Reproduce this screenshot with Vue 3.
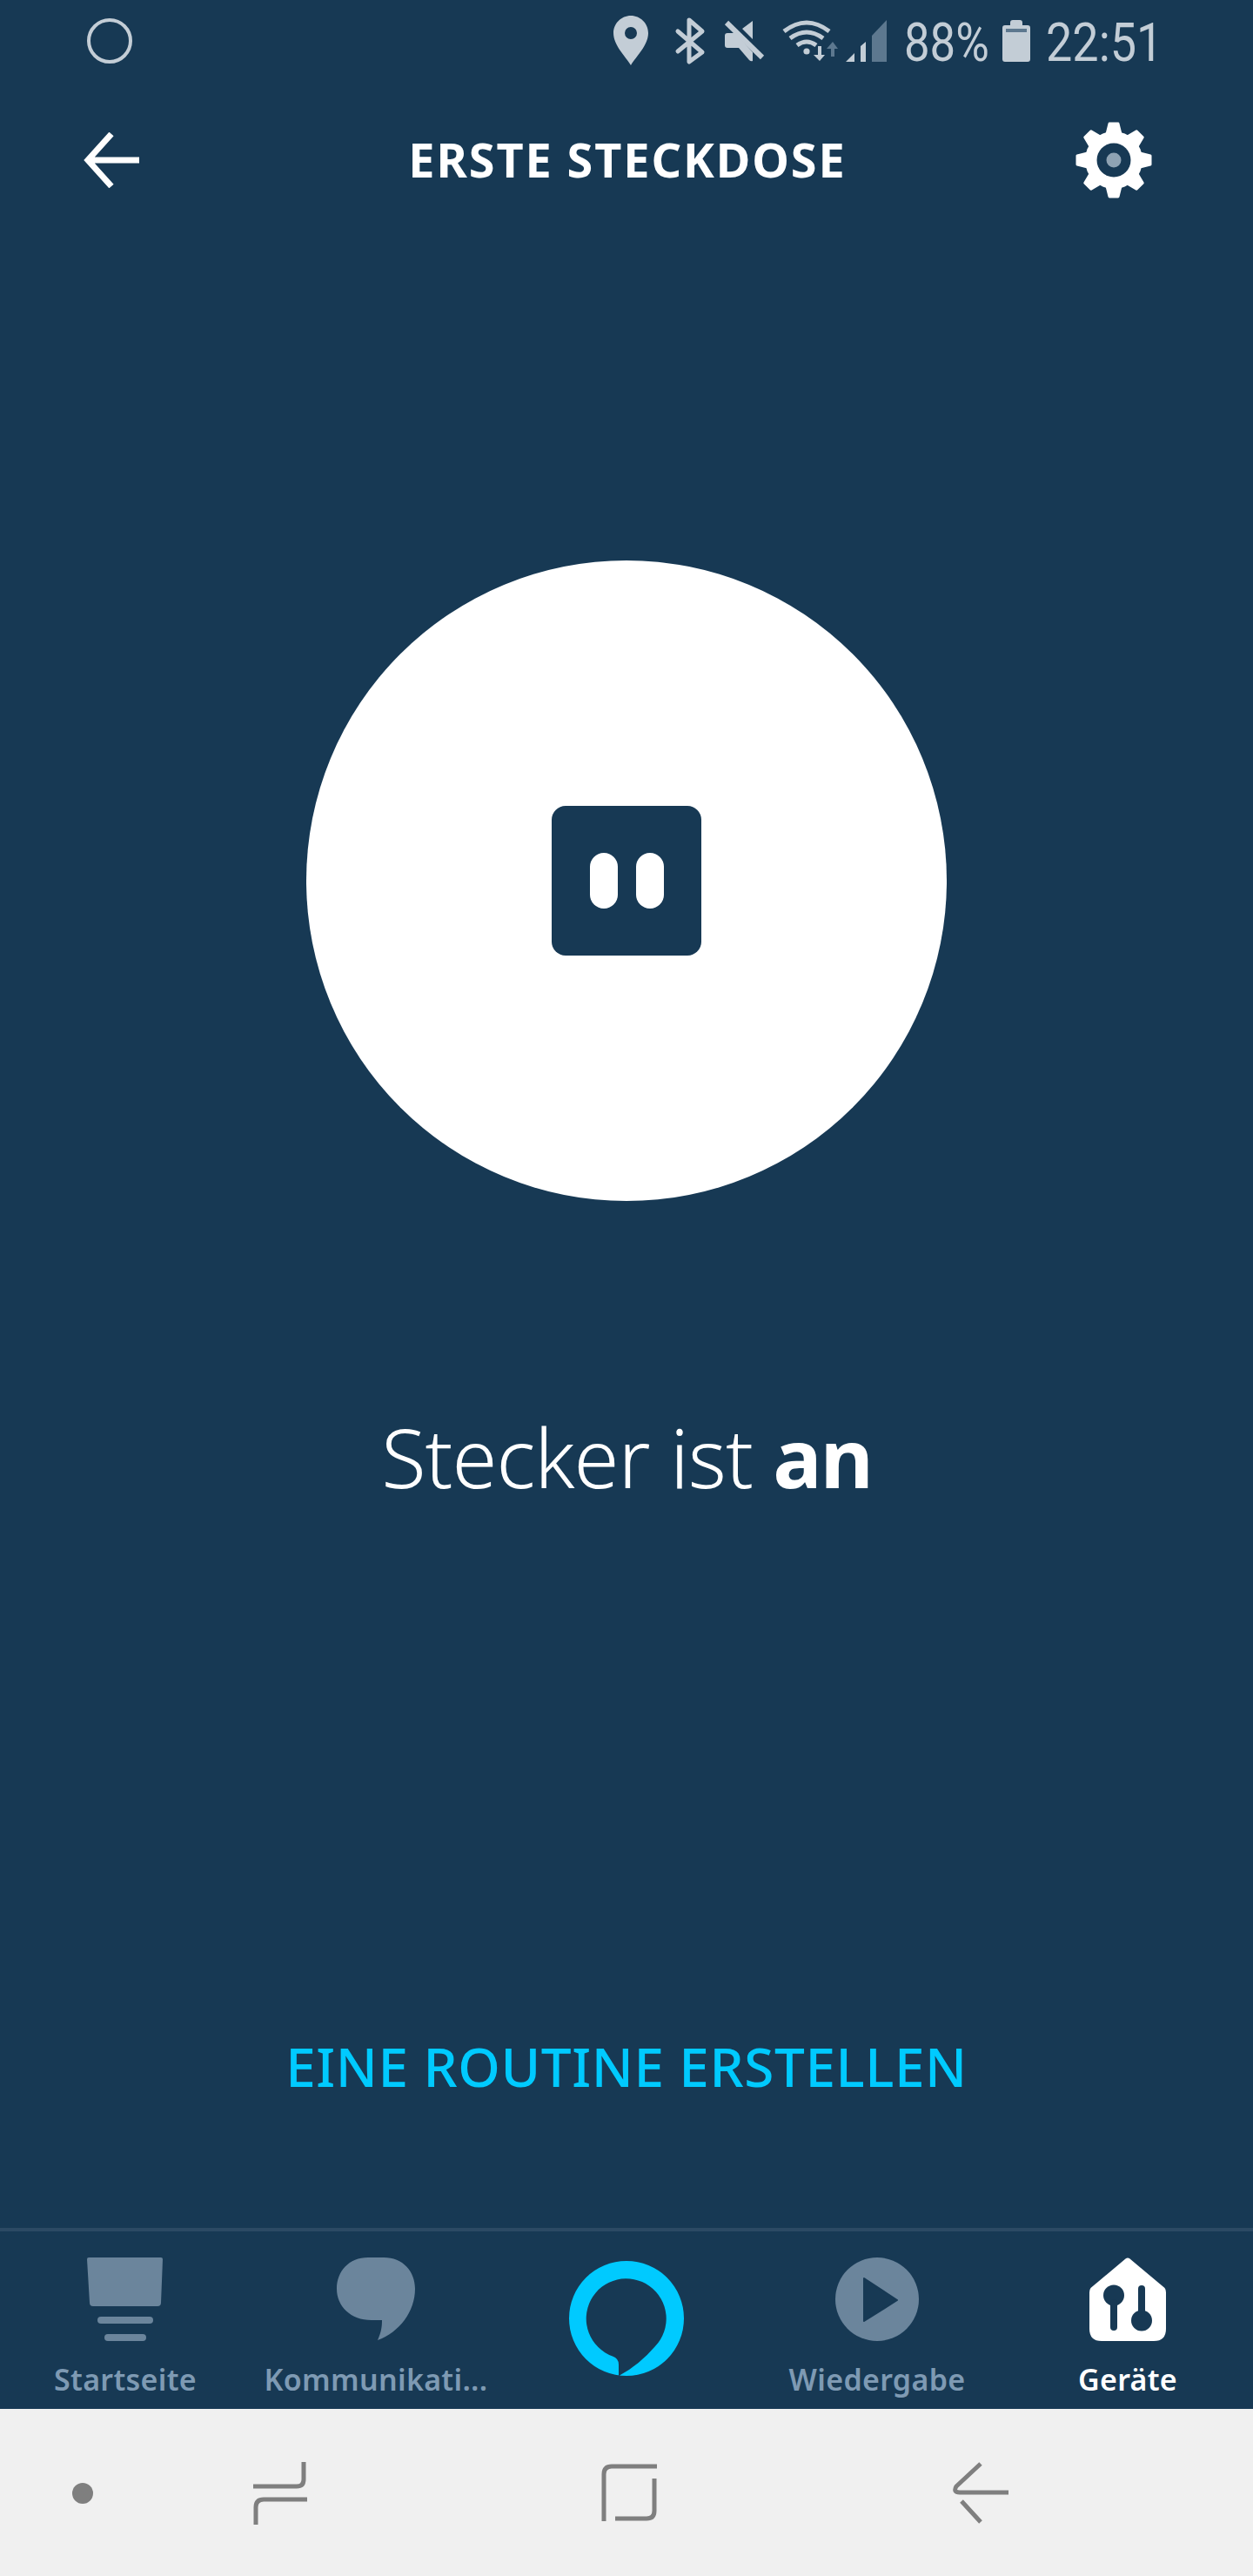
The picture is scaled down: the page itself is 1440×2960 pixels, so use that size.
<template>
  <div class="screen">
    <div class="status">
      <span class="cam"></span>
      <svg class="sys" width="322" height="60" viewBox="702 18 322 60">
        <path d="M725 18c-11 0-20 9-20 20 0 14 14 27 20 37 6-10 20-23 20-37 0-11-9-20-20-20zm0 27a7 7 0 1 1 0-14 7 7 0 0 1 0 14z" fill="#c3cdd6" fill-rule="evenodd" />
        <path d="M779 36l28 24-15 11V23l15 13-28 23" fill="none" stroke="#c3cdd6" stroke-width="5" stroke-linejoin="round" stroke-linecap="round" />
        <path d="M865 24v21l-12-12zM833 41q0-3 3-3h9l20 22v10q-2 1-4-1l-12-14h-13q-3 0-3-3z" fill="#c3cdd6" />
        <path d="M835 26l41 40" stroke="#c3cdd6" stroke-width="6" />
        <g fill="none" stroke="#c3cdd6" stroke-width="5">
          <path d="M901 36q26-20 52 0" />
          <path d="M908 44q19-14 38 0" />
          <path d="M916 52q11-8 22 0" />
        </g>
        <circle cx="927" cy="59" r="3.6" fill="#c3cdd6" />
        <path d="M940 53h4v10h4l-6 7-7-7h5z" fill="#c3cdd6" />
        <path d="M957 48l6 8h-4v9h-4v-9h-5z" fill="#5d788f" />
        <path d="M972 71l10-10v10zM989 53l6-5v23h-6z" fill="#c3cdd6" />
        <path d="M1002 41l17-18v48h-17z" fill="#5d788f" />
      </svg>
      <span class="pct">88%</span>
      <svg class="batt" width="32" height="48" viewBox="0 0 32 48">
        <path d="M9 3q0-3 3-3h8q3 0 3 3v3h6q3 0 3 3v36q0 3-3 3H3q-3 0-3-3V9q0-3 3-3h6z" fill="#c3cdd6" />
        <rect x="4" y="10" width="24" height="4" fill="#5d788f" />
      </svg>
      <span class="clock">22:51</span>
    </div>

    <div class="header">
      <svg width="64" height="64" viewBox="0 0 64 64">
        <path d="M32 2L5 32l27 30M5 32h59" fill="none" stroke="#fff" stroke-width="7" />
      </svg>
      <div class="title">ERSTE STECKDOSE</div>
      <svg class="gear" width="88" height="88" viewBox="-44 -44 88 88">
        <circle r="33" fill="#fff" />
        <path
          v-for="a in teeth"
          :key="a"
          d="M-8-30L-5-42H5L8-30z"
          fill="#fff"
          stroke="#fff"
          stroke-width="3"
          stroke-linejoin="round"
          :transform="`rotate(${a})`"
        />
        <circle r="19.5" fill="#173954" />
        <circle r="8.5" fill="#8fa3b3" />
      </svg>
    </div>

    <div class="main">
      <div class="plug-btn">
        <div class="plug">
          <span class="slot"></span>
          <span class="slot"></span>
        </div>
      </div>
      <div class="state">Stecker ist <b>an</b></div>
      <div class="routine">EINE ROUTINE ERSTELLEN</div>
    </div>

    <div class="nav">
      <div class="tab">
        <svg width="88" height="96" viewBox="0 0 88 96">
          <path d="M2 0h83q2 0 2 2l-2 50q0 4-4 4H7q-4 0-4-4L0 2q0-2 2-2z" fill="#6b859c" />
          <rect x="12" y="68" width="64" height="8" rx="4" fill="#6b859c" />
          <rect x="20" y="88" width="48" height="8" rx="4" fill="#6b859c" />
        </svg>
        <span>Startseite</span>
      </div>
      <div class="tab">
        <svg width="90" height="96" viewBox="0 0 90 96">
          <path d="M36 0h18c22 0 36 16 36 36 0 26-18 50-43 59 4-9 5-15 5-23H40C16 72 0 56 0 36 0 16 14 0 36 0z" fill="#6b859c" />
        </svg>
        <span>Kommunikati...</span>
      </div>
      <div class="tab">
        <svg class="ring" width="132" height="132" viewBox="0 0 132 132">
          <path
            d="M66 0a66 66 0 1 1 0 132A66 66 0 1 1 66 0zM57 131.400V119q0-7-7-9.500A46 46 0 1 1 99 98Q80 120 58 131.500z"
            fill="#00caff"
            fill-rule="evenodd"
          />
        </svg>
      </div>
      <div class="tab">
        <svg width="96" height="96" viewBox="0 0 96 96">
          <circle cx="48" cy="48" r="48" fill="#6b859c" />
          <path d="M33 24l38 25-38 24z" fill="#173954" stroke="#173954" stroke-width="2" stroke-linejoin="round" />
        </svg>
        <span>Wiedergabe</span>
      </div>
      <div class="tab active">
        <svg width="88" height="96" viewBox="0 0 88 96">
          <path d="M41.500 1.500Q44-.5 46.500 1.500L86.500 35Q88 37 88 40V82Q88 96 74 96H14Q0 96 0 82V40Q0 37 1.500 35Z" fill="#fff" />
          <g fill="#173954">
            <circle cx="28" cy="43.500" r="12" />
            <rect x="24" y="48" width="8" height="36" rx="4" />
            <circle cx="60" cy="72.500" r="12" />
            <rect x="56" y="32" width="8" height="36" rx="4" />
          </g>
        </svg>
        <span>Geräte</span>
      </div>
    </div>

    <div class="softkeys">
      <span class="dot"></span>
      <svg class="recents" width="62" height="72" viewBox="0 0 62 72">
        <path d="M58 0V20Q58 28 50 28H0M62 43H12Q3 43 3 52V72" fill="none" stroke="#7f7f7f" stroke-width="5" />
      </svg>
      <svg class="home" width="64" height="66" viewBox="0 0 64 66">
        <path d="M64 3H12Q3 3 3 12V66M61 17V54Q61 63 52 63H16" fill="none" stroke="#7f7f7f" stroke-width="5" />
      </svg>
      <svg class="back" width="64" height="72" viewBox="0 0 64 72">
        <path d="M32 2L4 28Q0 35 8 35H64M10 45L32 69" fill="none" stroke="#7f7f7f" stroke-width="5" />
      </svg>
    </div>
  </div>
</template>

<script setup>
const teeth = [0, 45, 90, 135, 180, 225, 270, 315]
</script>

<style>
body {
  margin: 0;
  background: #173954;
}
</style>

<style scoped>
.screen {
  width: 1440px;
  height: 2960px;
  display: flex;
  flex-direction: column;
  background: #173954;
  font-family: "Noto Sans", sans-serif;
  overflow: hidden;
}

.status {
  height: 94px;
  display: flex;
  align-items: flex-start;
  color: #c3cdd6;
  font-family: Roboto, sans-serif;
  font-size: 62px;
  line-height: 1;
}
.cam {
  width: 52px;
  height: 52px;
  margin: 21px 0 0 100px;
  box-sizing: border-box;
  border: 4px solid #c3cdd6;
  border-radius: 50%;
}
.sys {
  margin: 18px 0 0 550px;
}
.pct {
  width: 115px;
  margin: 18px 0 0 15px;
  flex: none;
  transform: scaleX(0.85);
  transform-origin: left;
}
.batt {
  margin: 23px 0 0 -2px;
}
.clock {
  width: 154px;
  margin: 18px 0 0 18px;
  flex: none;
  transform: scaleX(0.87);
  transform-origin: left;
}

.header {
  height: 180px;
  padding: 0 96px;
  display: grid;
  grid-template-columns: 1fr auto 1fr;
  align-items: center;
}
.title {
  margin: -3px 0 0 2px;
  color: #fff;
  font-size: 54px;
  font-weight: 700;
  letter-spacing: 1.9px;
}
.gear {
  justify-self: end;
  margin-right: 20px;
}

.main {
  flex: 1;
  display: flex;
  flex-direction: column;
  align-items: center;
}
.plug-btn {
  width: 736px;
  height: 736px;
  margin-top: 370px;
  border-radius: 50%;
  background: #fff;
  display: flex;
  align-items: center;
  justify-content: center;
}
.plug {
  width: 172px;
  height: 172px;
  border-radius: 16px;
  background: #173954;
  display: flex;
  align-items: center;
  justify-content: center;
  gap: 21px;
}
.slot {
  width: 32px;
  height: 64px;
  border-radius: 16px;
  background: #fff;
}
.state {
  margin-top: 234px;
  color: #fff;
  font-size: 94px;
  font-weight: 300;
  letter-spacing: -1px;
  line-height: 120px;
}
.state b {
  font-weight: 700;
  letter-spacing: -2px;
}
.routine {
  margin-top: 600px;
  color: #00caff;
  font-size: 62px;
  font-weight: 500;
  letter-spacing: 0.6px;
  line-height: 80px;
}

.nav {
  border-top: 4px solid #2c4a64;
  padding-top: 30px;
  height: 174px;
  display: grid;
  grid-template-columns: repeat(5, 1fr);
}
.tab {
  display: flex;
  flex-direction: column;
  align-items: center;
  color: #7e9ab3;
  font-size: 34px;
  font-weight: 600;
  letter-spacing: 0.3px;
  line-height: 46px;
}
.tab span {
  margin-top: 21px;
  white-space: nowrap;
}
.tab.active {
  color: #fff;
}
.ring {
  margin-top: 4px;
}

.softkeys {
  height: 192px;
  display: flex;
  align-items: center;
  background: #f0f0f0;
}
.dot {
  width: 24px;
  height: 24px;
  margin: 2px 0 0 83px;
  border-radius: 50%;
  background: #7f7f7f;
}
.recents {
  margin: 2px 0 0 184px;
}
.home {
  margin: 0 0 0 338px;
}
.back {
  margin: 2px 0 0 340px;
}
</style>
